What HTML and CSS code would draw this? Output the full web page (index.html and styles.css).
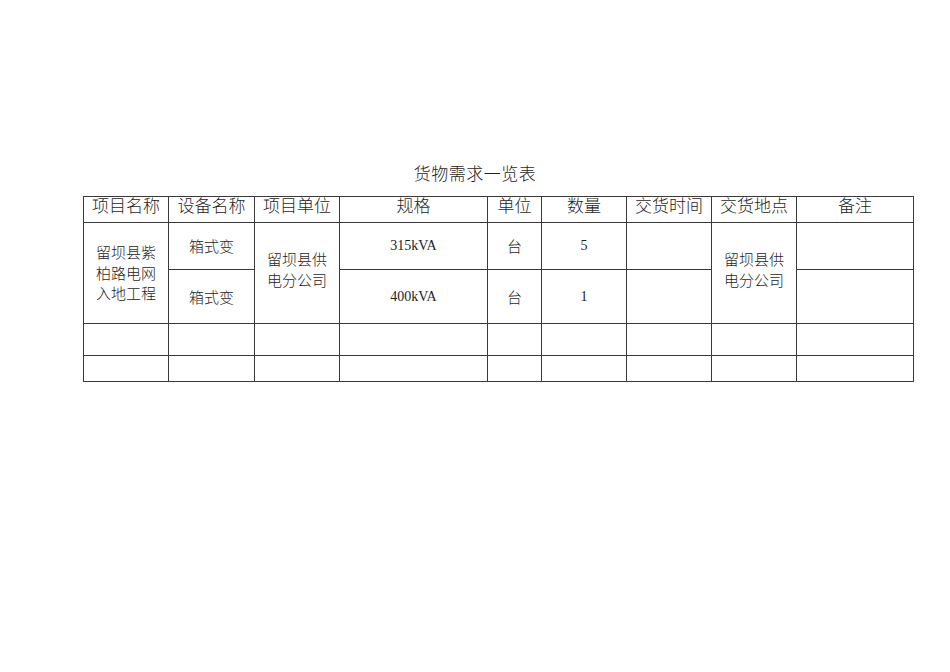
FILE: index.html
```html
<!DOCTYPE html>
<html lang="zh-CN">
<head>
<meta charset="utf-8">
<title>货物需求一览表</title>
<link rel="stylesheet" href="styles.css">
</head>
<body>
<div class="page">
  <h1 class="title">货物需求一览表</h1>
  <table class="goods">
    <colgroup>
      <col class="c85"><col class="c86"><col class="c85"><col class="c148"><col class="c54"><col class="c85"><col class="c85"><col class="c85"><col class="c117">
    </colgroup>
    <tr class="head">
      <th>项目名称</th><th>设备名称</th><th>项目单位</th><th>规格</th><th>单位</th><th>数量</th><th>交货时间</th><th>交货地点</th><th>备注</th>
    </tr>
    <tr class="r1">
      <td rowspan="2" class="multi"><span class="wrap4">留坝县紫柏路电网入地工程</span></td>
      <td class="txt">箱式变</td>
      <td rowspan="2" class="multi two"><span class="wrap4">留坝县供电分公司</span></td>
      <td class="num">315kVA</td>
      <td class="txt">台</td>
      <td class="num">5</td>
      <td></td>
      <td rowspan="2" class="multi two"><span class="wrap4">留坝县供电分公司</span></td>
      <td></td>
    </tr>
    <tr class="r2">
      <td class="txt">箱式变</td>
      <td class="num">400kVA</td>
      <td class="txt">台</td>
      <td class="num">1</td>
      <td></td>
      <td></td>
    </tr>
    <tr class="r3"><td></td><td></td><td></td><td></td><td></td><td></td><td></td><td></td><td></td></tr>
    <tr class="r4"><td></td><td></td><td></td><td></td><td></td><td></td><td></td><td></td><td></td></tr>
  </table>
</div>
</body>
</html>
```

FILE: styles.css
```css
html, body {
  margin: 0;
  padding: 0;
  background: #ffffff;
}
.page {
  padding-top: 162px;
  font-family: "Noto Sans CJK SC", "Noto Sans", sans-serif;
  color: #1e1e1e;
}
.title {
  margin: 0 0 12px 0;
  font-size: 17px;
  font-weight: 300;
  line-height: 22px;
  text-align: center;
  letter-spacing: 0.5px;
}
.goods {
  margin-left: 83px;
  border-collapse: collapse;
  table-layout: fixed;
  width: 831px;
}
.goods td, .goods th {
  border: 1px solid #3a3a3a;
  padding: 0;
  text-align: center;
  vertical-align: middle;
}
.c85 { width: 85px; }
.c86 { width: 86px; }
.c148 { width: 148px; }
.c54 { width: 54px; }
.c117 { width: 117px; }
.head th {
  height: 25px;
  font-size: 17px;
  font-weight: 300;
  line-height: 16px;
  vertical-align: top;
}
.r1 td { height: 46px; }
.r2 td { height: 53px; }
.r3 td { height: 31px; }
.r4 td { height: 25px; }
.multi {
  font-size: 15px;
  font-weight: 300;
  line-height: 20.5px;
  padding-bottom: 3px;
}
.multi.two {
  padding-bottom: 7px;
}
.wrap4 {
  display: inline-block;
  width: 62px;
  word-break: break-all;
}
.txt {
  font-size: 15px;
  font-weight: 300;
  line-height: 20px;
  padding-bottom: 5px;
}
.num {
  font-family: "Liberation Serif", serif;
  font-size: 14px;
  line-height: 18px;
  padding-bottom: 4px;
}
```
